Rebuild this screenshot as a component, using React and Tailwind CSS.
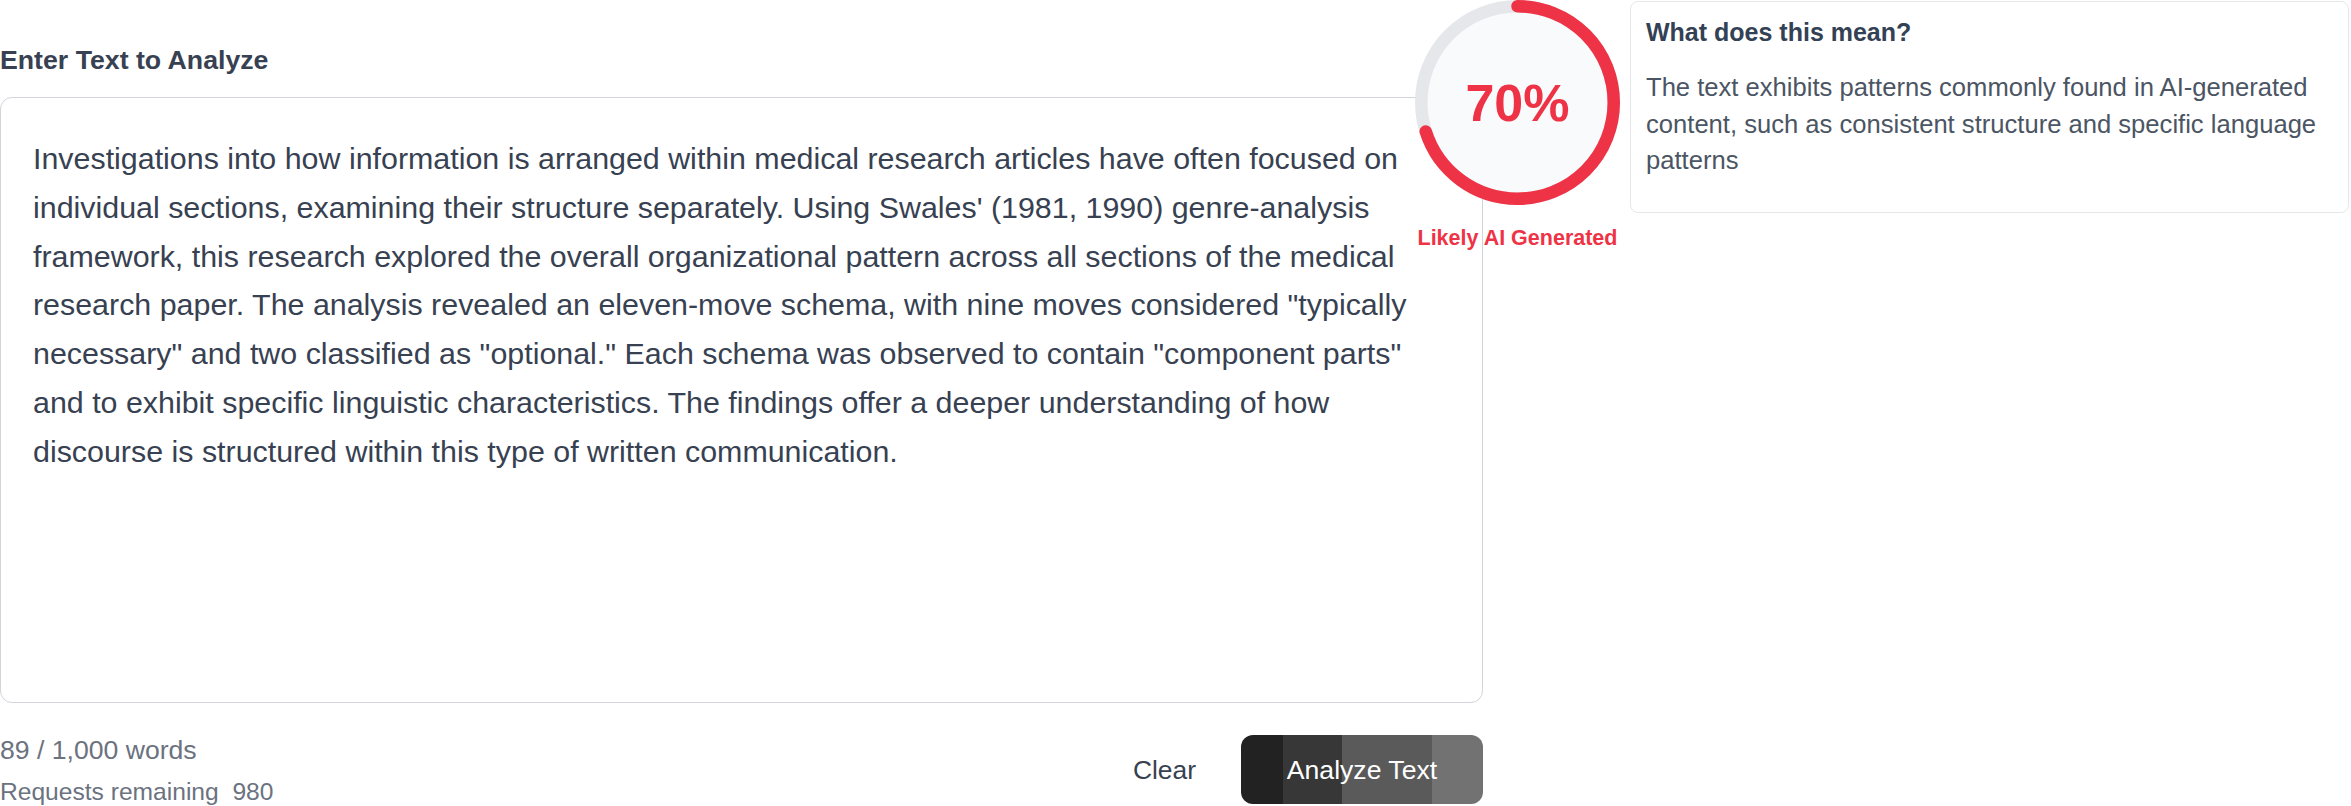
export default function App() {
  const lines = [
    "Investigations into how information is arranged within medical research articles have often focused on",
    "individual sections, examining their structure separately. Using Swales' (1981, 1990) genre-analysis",
    "framework, this research explored the overall organizational pattern across all sections of the medical",
    'research paper. The analysis revealed an eleven-move schema, with nine moves considered "typically',
    'necessary" and two classified as "optional." Each schema was observed to contain "component parts"',
    "and to exhibit specific linguistic characteristics. The findings offer a deeper understanding of how",
    "discourse is structured within this type of written communication.",
  ];
  const r = 96.25;
  const c = 2 * Math.PI * r;
  return (
    <div className="relative flex w-[2351px] h-[806px] bg-white font-['Liberation_Sans',Arial,sans-serif] overflow-hidden">
      <div className="flex w-[1483px] flex-col">
        <div className="mt-[47px] h-[26px] text-[26.7px] leading-[26px] font-bold text-[#374151]">
          Enter Text to Analyze
        </div>
        <div className="mt-[24px] h-[606px] rounded-[12px] border-[1.5px] border-[#d1d5db] pl-[32px] pt-[36px] text-[30.4px] leading-[48.75px] text-[#374151] whitespace-nowrap">
          {lines.map((l, i) => (
            <div key={i}>{l}</div>
          ))}
        </div>
        <div className="mt-[32px] flex items-start justify-between">
          <div className="flex flex-col pt-[2px] text-[#6b7280]">
            <div className="text-[26.6px] leading-[26px]">89 / 1,000 words</div>
            <div className="mt-[17px] text-[24.6px] leading-[24px] whitespace-pre">Requests remaining  980</div>
          </div>
          <div className="flex items-center gap-[45px]">
            <button className="text-[26.4px] leading-[26px] text-[#374151]">Clear</button>
            <button className="h-[69px] w-[242px] rounded-[12px] bg-[linear-gradient(90deg,#222222_0%,#222222_17.4%,#373737_17.4%,#373737_41.6%,#5a5a5a_41.6%,#5a5a5a_78.9%,#727272_78.9%,#727272_100%)] text-[26.6px] leading-[26px] text-white">
              Analyze Text
            </button>
          </div>
        </div>
      </div>

      <div className="ml-[147px] mt-[1px] h-[212px] w-[719px] rounded-[8px] border-[1.5px] border-[#e5e7eb] px-[15px] pt-[15px]">
        <div className="text-[25px] leading-[30px] font-bold text-[#334155]">What does this mean?</div>
        <div className="mt-[22px] text-[25.6px] leading-[36.5px] text-[#4b5563]">
          The text exhibits patterns commonly found in AI-generated content, such as consistent structure and specific language patterns
        </div>
      </div>

      <div className="absolute left-[1415px] top-0 flex w-[205px] flex-col items-center">
        <div className="relative h-[205px] w-[205px]">
          <svg width="205" height="205" viewBox="0 0 205 205" className="absolute inset-0">
            <circle cx="102.5" cy="102.5" r={r} fill="#f8fafc" stroke="#e5e7eb" strokeWidth="12.5" />
            <circle
              cx="102.5"
              cy="102.5"
              r={r}
              fill="none"
              stroke="#ef3346"
              strokeWidth="12.5"
              strokeLinecap="round"
              strokeDasharray={`${c * 0.7} ${c}`}
              transform="rotate(-90 102.5 102.5)"
            />
          </svg>
          <div className="absolute inset-0 flex items-center justify-center text-[52px] leading-none font-bold text-[#ef3346]">
            70%
          </div>
        </div>
        <div className="mt-[22px] whitespace-nowrap text-[21.5px] leading-[22px] font-bold text-[#ef3346]">
          Likely AI Generated
        </div>
      </div>
    </div>
  );
}
